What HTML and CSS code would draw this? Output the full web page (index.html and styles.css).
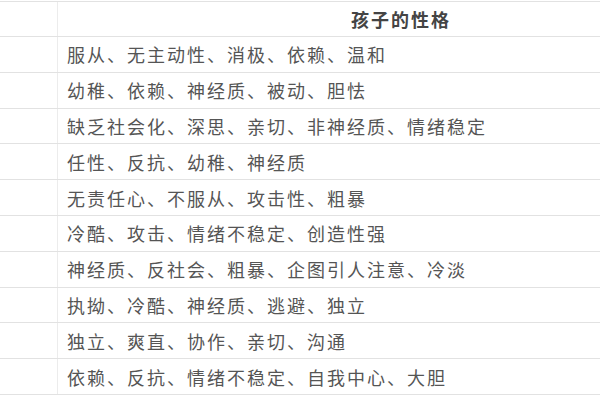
FILE: index.html
```html
<!DOCTYPE html>
<html lang="zh">
<head>
<meta charset="utf-8">
<link rel="stylesheet" href="styles.css">
</head>
<body>
<div class="table">
  <div class="row head"><div class="c1"></div><div class="c2">孩子的性格</div></div>
  <div class="row"><div class="c1"></div><div class="c2">服从、无主动性、消极、依赖、温和</div></div>
  <div class="row"><div class="c1"></div><div class="c2">幼稚、依赖、神经质、被动、胆怯</div></div>
  <div class="row"><div class="c1"></div><div class="c2">缺乏社会化、深思、亲切、非神经质、情绪稳定</div></div>
  <div class="row"><div class="c1"></div><div class="c2">任性、反抗、幼稚、神经质</div></div>
  <div class="row"><div class="c1"></div><div class="c2">无责任心、不服从、攻击性、粗暴</div></div>
  <div class="row"><div class="c1"></div><div class="c2">冷酷、攻击、情绪不稳定、创造性强</div></div>
  <div class="row"><div class="c1"></div><div class="c2">神经质、反社会、粗暴、企图引人注意、冷淡</div></div>
  <div class="row"><div class="c1"></div><div class="c2">执拗、冷酷、神经质、逃避、独立</div></div>
  <div class="row"><div class="c1"></div><div class="c2">独立、爽直、协作、亲切、沟通</div></div>
  <div class="row"><div class="c1"></div><div class="c2">依赖、反抗、情绪不稳定、自我中心、大胆</div></div>
</div>
</body>
</html>
```
FILE: styles.css
```css
html, body {
  margin: 0;
  padding: 0;
  background: #fff;
}
.table {
  margin-top: 1px;
  border-top: 1px solid #e2e2e2;
  font-family: "Noto Sans CJK SC", "Microsoft YaHei", sans-serif;
  color: #555;
}
.row {
  display: grid;
  grid-template-columns: 58px 1fr;
  height: 35.8px;
  box-sizing: border-box;
  border-bottom: 1px solid #e2e2e2;
}
.row.head {
  height: 35px;
}
.c1 {
  border-right: 1px solid #ececec;
}
.c2 {
  display: flex;
  align-items: center;
  padding-left: 9px;
  font-size: 18px;
  letter-spacing: 2px;
  white-space: nowrap;
}
.head .c2 {
  justify-content: center;
  padding-left: 144px;
  font-weight: bold;
  color: #444;
  letter-spacing: 2px;
}
```
